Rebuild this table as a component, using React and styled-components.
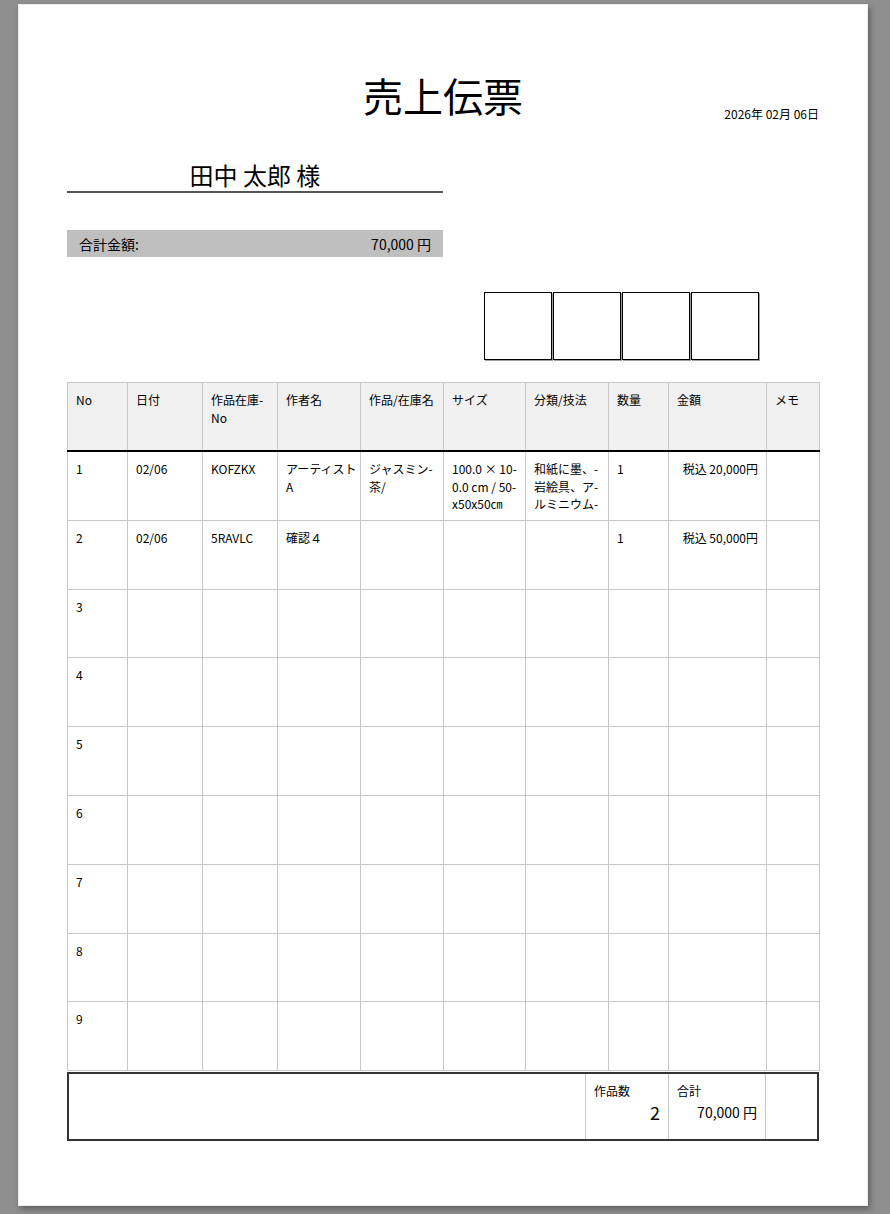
import React from "react";
import styled, { createGlobalStyle } from "styled-components";

const columns = [
  { key: "no", title: "No", width: 60 },
  { key: "date", title: "日付", width: 75 },
  { key: "code", title: "作品在庫-\nNo", width: 75 },
  { key: "artist", title: "作者名", width: 83 },
  { key: "work", title: "作品/在庫名", width: 83 },
  { key: "size", title: "サイズ", width: 82 },
  { key: "tech", title: "分類/技法", width: 83 },
  { key: "qty", title: "数量", width: 60 },
  { key: "price", title: "金額", width: 98, align: "right" },
  { key: "memo", title: "メモ", width: 53 },
];

const items = [
  {
    no: "1",
    date: "02/06",
    code: "KOFZKX",
    artist: "アーティスト\nA",
    work: "ジャスミン-\n茶/",
    size: "100.0 × 10-\n0.0 cm / 50-\nx50x50㎝",
    tech: "和紙に墨、-\n岩絵具、ア-\nルミニウム-",
    qty: "1",
    price: "税込 20,000円",
  },
  {
    no: "2",
    date: "02/06",
    code: "5RAVLC",
    artist: "確認４",
    qty: "1",
    price: "税込 50,000円",
  },
];

const rows = Array.from({ length: 9 }, (_, i) => items[i] || { no: String(i + 1) });

const GlobalStyle = createGlobalStyle`
  html, body {
    margin: 0;
    background: #8f8f8f;
  }
  body {
    font-family: "Noto Sans CJK JP", "Noto Sans", sans-serif;
    color: #000;
  }
`;

const Viewer = styled.div`
  padding: 4px 0 8px 18px;
`;

const Paper = styled.div`
  width: 850px;
  height: 1202px;
  box-sizing: border-box;
  background: #fff;
  padding: 67px 49px 0;
  box-shadow: inset 0 0 0 1px #ededed, 2px 3px 6px rgba(0, 0, 0, 0.35);
`;

const Head = styled.header`
  display: grid;
  grid-template-columns: 1fr auto 1fr;
  align-items: end;
`;

const Title = styled.h1`
  grid-column: 2;
  margin: 0;
  font-size: 40px;
  font-weight: 400;
  line-height: 48px;
`;

const IssueDate = styled.div`
  justify-self: end;
  font-size: 12px;
  line-height: 18px;
  margin-bottom: -4px;
`;

const Customer = styled.div`
  width: 376px;
  margin-top: 46px;
  padding-bottom: 6px;
  border-bottom: 2px solid #555;
  text-align: center;
  font-size: 24px;
  line-height: 20px;
`;

const TotalBar = styled.div`
  width: 376px;
  height: 27px;
  box-sizing: border-box;
  margin-top: 37px;
  padding: 0 12px;
  background: #bfbfbf;
  display: flex;
  align-items: center;
  justify-content: space-between;
  font-size: 14px;
`;

const StampRow = styled.div`
  display: flex;
  gap: 1px;
  margin-top: 35px;
  padding-left: 417px;
`;

const Stamp = styled.div`
  width: 66px;
  height: 66px;
  border: 1px solid #000;
  box-shadow: 1px 1px 0 #a0a0a0;
`;

const Sheet = styled.table`
  width: 751px;
  margin-top: 22px;
  border-collapse: collapse;
  table-layout: fixed;
  font-size: 12px;
  line-height: 17.5px;
`;

const HeadCell = styled.th`
  height: 52px;
  padding: 8px 8px 7px;
  background: #f0f0f0;
  border: 1px solid #c8c8c8;
  border-bottom: 2px solid #000;
  font-weight: 400;
  line-height: 18px;
  text-align: left;
  vertical-align: top;
  white-space: pre;
`;

const Cell = styled.td`
  height: 53.8px;
  padding: 8px 8px 6px;
  border: 1px solid #c8c8c8;
  text-align: ${(p) => p.$align || "left"};
  vertical-align: top;
  white-space: pre;
`;

const Summary = styled.table`
  width: 752px;
  margin-top: 1px;
  border-collapse: separate;
  border-spacing: 0;
  table-layout: fixed;
  border: 2px solid #333;
`;

const SumCell = styled.td`
  height: 49px;
  padding: 8px;
  border-left: ${(p) => (p.$first ? "none" : "1px solid #c8c8c8")};
  vertical-align: top;
`;

const SumLabel = styled.div`
  font-size: 12px;
  line-height: 18px;
`;

const SumValue = styled.div`
  text-align: right;
  font-size: ${(p) => p.$size || 14}px;
  line-height: 24px;
`;

export default function App() {
  return (
    <>
      <GlobalStyle />
      <Viewer>
        <Paper>
          <Head>
            <Title>売上伝票</Title>
            <IssueDate>2026年 02月 06日</IssueDate>
          </Head>

          <Customer>田中 太郎 様</Customer>

          <TotalBar>
            <span>合計金額:</span>
            <span>70,000 円</span>
          </TotalBar>

          <StampRow>
            {[0, 1, 2, 3].map((i) => (
              <Stamp key={i} />
            ))}
          </StampRow>

          <Sheet>
            <colgroup>
              {columns.map((c) => (
                <col key={c.key} style={{ width: c.width }} />
              ))}
            </colgroup>
            <thead>
              <tr>
                {columns.map((c) => (
                  <HeadCell key={c.key}>{c.title}</HeadCell>
                ))}
              </tr>
            </thead>
            <tbody>
              {rows.map((r) => (
                <tr key={r.no}>
                  {columns.map((c) => (
                    <Cell key={c.key} $align={c.align}>
                      {r[c.key] || ""}
                    </Cell>
                  ))}
                </tr>
              ))}
            </tbody>
          </Sheet>

          <Summary>
            <colgroup>
              <col style={{ width: 516 }} />
              <col style={{ width: 83 }} />
              <col style={{ width: 97 }} />
              <col style={{ width: 52 }} />
            </colgroup>
            <tbody>
              <tr>
                <SumCell $first />
                <SumCell>
                  <SumLabel>作品数</SumLabel>
                  <SumValue $size={18}>2</SumValue>
                </SumCell>
                <SumCell>
                  <SumLabel>合計</SumLabel>
                  <SumValue>70,000 円</SumValue>
                </SumCell>
                <SumCell />
              </tr>
            </tbody>
          </Summary>
        </Paper>
      </Viewer>
    </>
  );
}
